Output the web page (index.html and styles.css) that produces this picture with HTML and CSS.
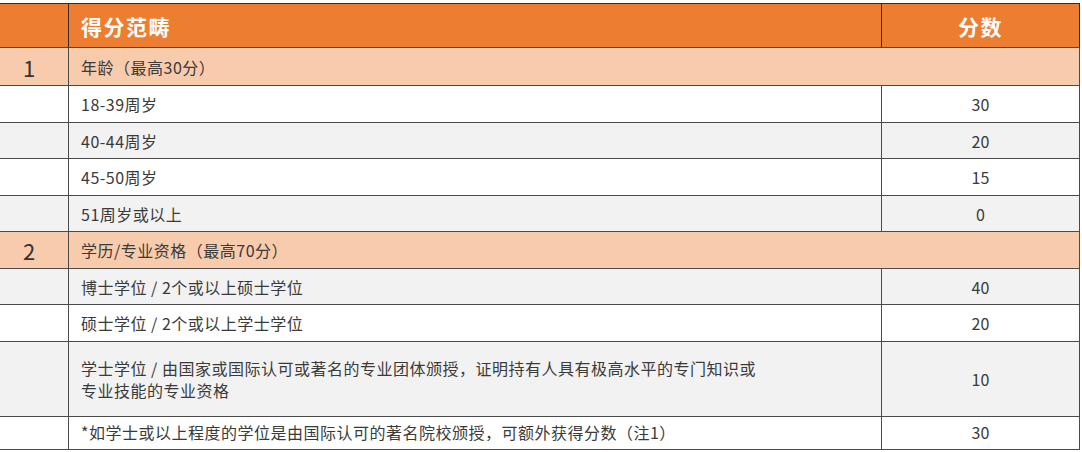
FILE: index.html
```html
<!DOCTYPE html>
<html lang="zh-CN">
<head>
<meta charset="utf-8">
<title>得分范畴</title>
<link rel="stylesheet" href="styles.css">
</head>
<body>
<table class="score-table">
  <colgroup>
    <col class="col-no">
    <col class="col-item">
    <col class="col-score">
  </colgroup>
  <thead>
    <tr class="head-row">
      <th class="no"></th>
      <th class="item">得分范畴</th>
      <th class="score">分数</th>
    </tr>
  </thead>
  <tbody>
    <tr class="cat-row h39">
      <td class="no">1</td>
      <td class="item" colspan="2">年龄（最高30分）</td>
    </tr>
    <tr class="white h37">
      <td></td><td class="item">18-39周岁</td><td class="score">30</td>
    </tr>
    <tr class="gray h36">
      <td></td><td class="item">40-44周岁</td><td class="score">20</td>
    </tr>
    <tr class="white h37">
      <td></td><td class="item">45-50周岁</td><td class="score">15</td>
    </tr>
    <tr class="gray h36">
      <td></td><td class="item">51周岁或以上</td><td class="score">0</td>
    </tr>
    <tr class="cat-row h38">
      <td class="no">2</td>
      <td class="item" colspan="2">学历/专业资格（最高70分）</td>
    </tr>
    <tr class="gray h36">
      <td></td><td class="item">博士学位 / 2个或以上硕士学位</td><td class="score">40</td>
    </tr>
    <tr class="white h37">
      <td></td><td class="item">硕士学位 / 2个或以上学士学位</td><td class="score">20</td>
    </tr>
    <tr class="gray h74">
      <td></td><td class="item two-line">学士学位 / 由国家或国际认可或著名的专业团体颁授，证明持有人具有极高水平的专门知识或<br>专业技能的专业资格</td><td class="score">10</td>
    </tr>
    <tr class="white h33">
      <td></td><td class="item">*如学士或以上程度的学位是由国际认可的著名院校颁授，可额外获得分数（注1）</td><td class="score">30</td>
    </tr>
  </tbody>
</table>
</body>
</html>
```

FILE: styles.css
```css
html, body {
  margin: 0;
  padding: 0;
  background: #ffffff;
}

body {
  padding-top: 3px;
  font-family: "Noto Sans CJK SC", "Noto Sans", sans-serif;
  color: #3a3a3a;
}

.score-table {
  border-collapse: collapse;
  table-layout: fixed;
  width: 1081px;
  margin-left: -1px;
}

.col-no { width: 69px; }
.col-score { width: 198px; }

.score-table th,
.score-table td {
  border: 1px solid #4a4a4a;
  padding: 0;
  vertical-align: middle;
}

.head-row th {
  background: #ed7d31;
  color: #ffffff;
  font-weight: 700;
  font-size: 21px;
  letter-spacing: 1.5px;
  height: 43px;
  border-color: #3a2a20;
  border-bottom-color: #7a3a10;
}

.head-row th.item {
  text-align: left;
  padding-left: 12px;
}

.head-row th.score {
  text-align: center;
}

.item {
  text-align: left;
  padding-left: 12px !important;
  font-size: 16px;
  letter-spacing: 0.5px;
}

.score {
  text-align: center;
  font-size: 16px;
}

.no {
  text-align: center;
  font-size: 22px;
  color: #333333;
  padding-right: 10px !important;
}

.cat-row td { background: #f8cbad; }
.white td { background: #ffffff; }
.gray td { background: #f2f2f2; }

.two-line { line-height: 22px; }

.h33 td {
  height: 30px;
  padding-bottom: 2px;
}
.h36 td { height: 35px; }
.h37 td { height: 36px; }
.h38 td { height: 36px; }
.h39 td { height: 37px; }
.h74 td { height: 74px; }
```
